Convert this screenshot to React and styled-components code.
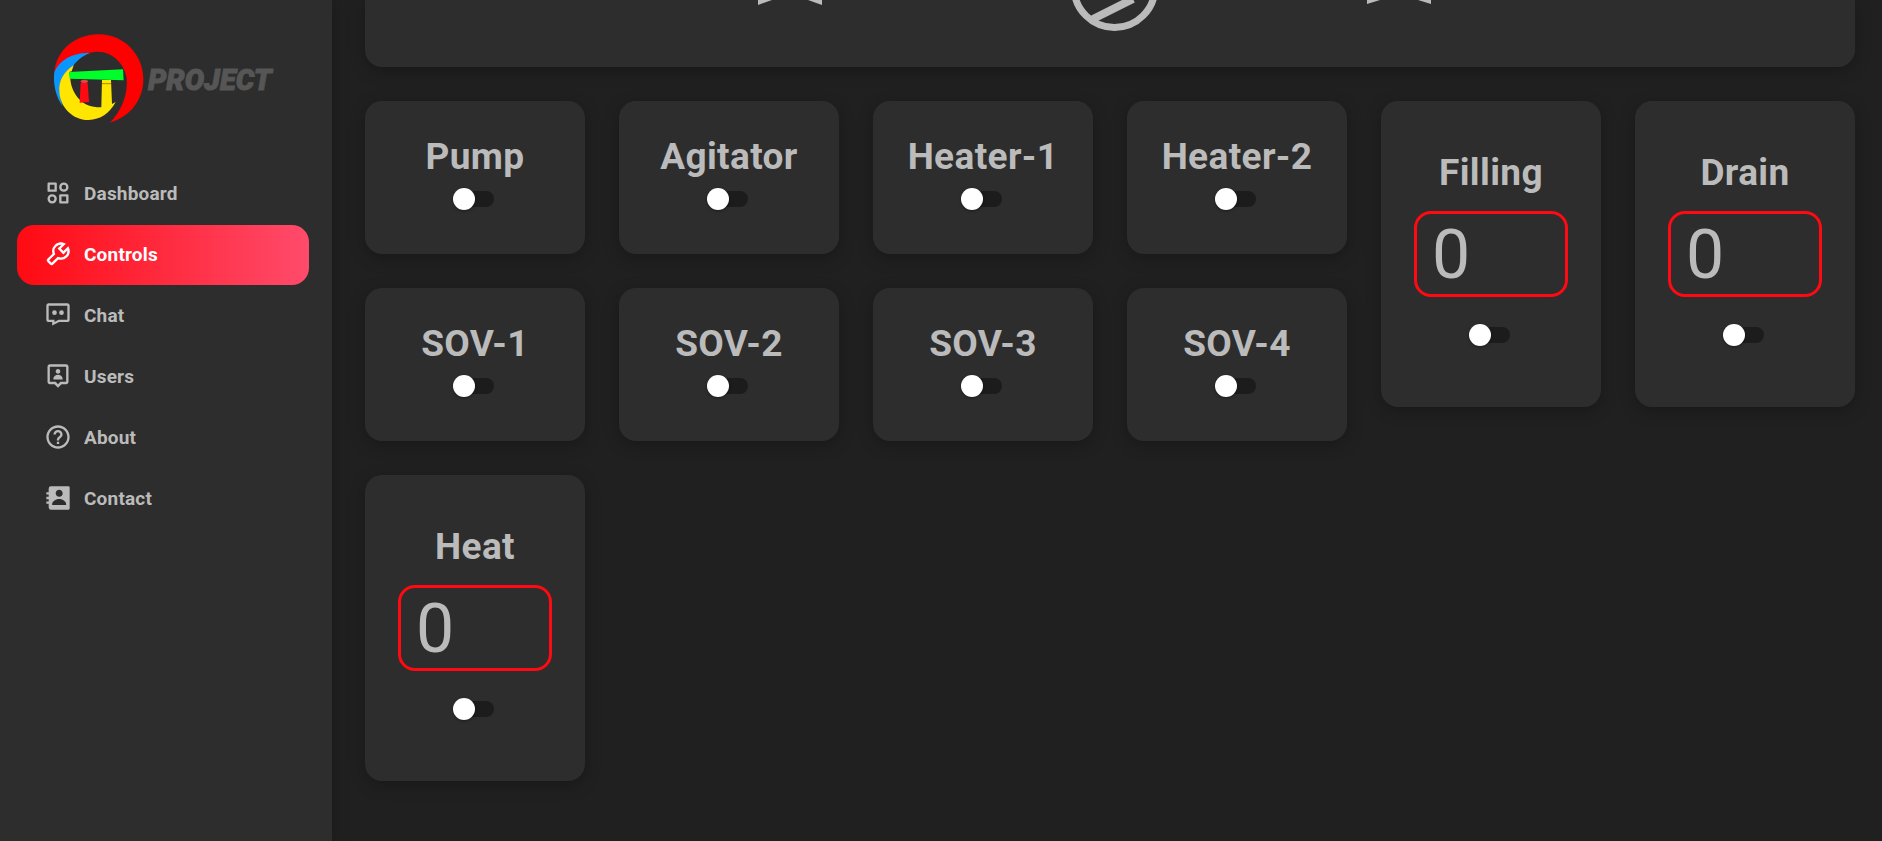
import React from "react";
import styled, { createGlobalStyle } from "styled-components";
import {
  BiWrench,
  BiUserPin,
  BiHelpCircle,
  BiSolidContact,
} from "react-icons/bi";

const color = {
  page: "#202020",
  surface: "#2d2d2d",
  text: "#bbbbbb",
  track: "#1c1c1c",
  accent: "#ff0a12",
  accentSoft: "#ff4b6b",
};

const GlobalStyle = createGlobalStyle`
  *, *::before, *::after { box-sizing: border-box; }
  body {
    margin: 0;
    background: ${color.page};
    color: ${color.text};
    font-family: Roboto, "Liberation Sans", sans-serif;
  }
`;

const Layout = styled.div`
  display: flex;
  min-height: 100vh;
`;

const Sidebar = styled.aside`
  flex: 0 0 332px;
  padding: 33px 23px 0 17px;
  background: ${color.surface};
  box-shadow: 0 4px 16px rgba(0, 0, 0, 0.25);
`;

const Brand = styled.a`
  display: flex;
  align-items: center;
  gap: 4px;
  margin: 0 0 40px 36px;
  text-decoration: none;
`;

const BrandName = styled.span`
  padding-top: 2px;
  color: #565656;
  font: italic 900 29px/40px Roboto, sans-serif;
  -webkit-text-stroke: 1px #565656;
`;

const NavList = styled.ul`
  display: flex;
  flex-direction: column;
  gap: 1px;
  margin: 0;
  padding: 0;
  list-style: none;
`;

const NavLink = styled.a`
  display: flex;
  align-items: center;
  gap: 12px;
  height: 60px;
  padding: 0 27px 2px;
  border-radius: 17px;
  color: ${(p) => (p.$active ? "#ffffff" : color.text)};
  background: ${(p) =>
    p.$active
      ? `linear-gradient(to right, ${color.accent}, ${color.accentSoft})`
      : "none"};
  font-size: 19px;
  font-weight: 700;
  letter-spacing: 0.01em;
  text-decoration: none;

  svg {
    width: 28px;
    height: 28px;
  }
`;

const Main = styled.main`
  flex: 1;
  min-width: 0;
  padding: 0 27px 60px 33px;
`;

const DiagramPanel = styled.section`
  margin-bottom: 34px;
  border-radius: 0 0 17px 17px;
  background: ${color.surface};
  box-shadow: 0 4px 16px rgba(0, 0, 0, 0.25);

  svg {
    display: block;
    width: 100%;
  }
`;

const Grid = styled.div`
  display: grid;
  grid-template-columns: repeat(6, minmax(0, 1fr));
  gap: 34px;
  align-items: start;
`;

const Card = styled.section`
  display: flex;
  flex-direction: column;
  align-items: center;
  padding: ${(p) => (p.$tall ? "50px 33px 61px" : "34px 16px 44px")};
  grid-row: ${(p) => (p.$tall ? "span 2" : "auto")};
  border-radius: 17px;
  background: ${color.surface};
  box-shadow: 0 4px 16px rgba(0, 0, 0, 0.25);
`;

const CardTitle = styled.label`
  font-size: 37px;
  font-weight: 700;
  line-height: 44px;
  letter-spacing: 0.01em;
  white-space: nowrap;
`;

const AmountInput = styled.input`
  width: 100%;
  height: 86px;
  margin: 16px 0 18px;
  padding: 2px 15px 0;
  border: 3px solid ${color.accent};
  border-radius: 17px;
  outline: none;
  background: transparent;
  color: ${color.text};
  font: 400 68px Roboto, "Liberation Sans", sans-serif;
  appearance: textfield;

  &::-webkit-inner-spin-button {
    appearance: none;
    margin: 0;
  }
`;

const Switch = styled.input`
  appearance: none;
  display: flex;
  align-items: center;
  width: 38px;
  height: 16px;
  margin: 12px 0 3px;
  border-radius: 8px;
  background: ${color.track};
  cursor: pointer;

  &::before {
    content: "";
    flex: none;
    width: 22px;
    height: 22px;
    margin-left: -3px;
    border-radius: 50%;
    background: #ffffff;
    box-shadow: 0 1px 3px rgba(0, 0, 0, 0.4);
  }

  &:checked {
    background: ${color.accent};
  }

  &:checked::before {
    margin-left: 19px;
  }
`;

const DashboardIcon = () => (
  <svg
    viewBox="0 0 24 24"
    fill="none"
    stroke="currentColor"
    strokeWidth="2"
    strokeLinejoin="round"
    aria-hidden="true"
  >
    <rect x="4" y="4" width="6" height="6" />
    <circle cx="17" cy="7" r="3" />
    <circle cx="7" cy="17" r="3" />
    <rect x="14" y="14" width="6" height="6" />
  </svg>
);

const ChatIcon = () => (
  <svg viewBox="0 0 24 24" fill="currentColor" aria-hidden="true">
    <path d="M20 2H4c-1.103 0-2 .897-2 2v12c0 1.103.897 2 2 2h3v3l6-3h7c1.103 0 2-.897 2-2V4c0-1.103-.897-2-2-2zm0 14h-7.500L9 18v-2H4V4h16v12z" />
    <circle cx="9" cy="10" r="2" />
    <circle cx="15" cy="10" r="2" />
  </svg>
);

const Emblem = () => (
  <svg width="91" height="91" viewBox="159 99 273 273" aria-hidden="true">
    <path
      fill="#ff0000"
      d="M163 222C166 152 225 103 296 103C372 103 430 164 430 238C430 298 392 350 330 368C362 336 385 285 380 235C374 190 335 155 295 155C284 155 272 157 262 160C215 160 178 190 163 222Z"
    />
    <path
      fill="#0a95ff"
      d="M163 216C178 180 220 156 270 159C245 168 228 185 220 197C195 212 176 240 179 275C180 292 184 305 188 319C170 295 158 255 163 216Z"
    />
    <path
      fill="#ffe600"
      d="M221 196C190 215 175 245 178 275C180 322 220 361 266 360C302 358 327 342 347 306L336 312L333 240L306 240L304 322C277 323 256 315 240 300C220 280 212 255 211 236L207 216L215 214Z"
    />
    <path fill="#ff0a12" d="M242 248L263 248L267 306L239 308Z" />
    <ellipse cx="253" cy="244" rx="11" ry="5" fill="#e8454a" />
    <path stroke="#6b5f00" strokeWidth="2" d="M306 251H333" />
    <path fill="#00ff2a" d="M207 216L369 208L371 241L209 236Z" />
  </svg>
);

const Diagram = () => (
  <svg viewBox="0 0 1490 67" aria-hidden="true">
    <g fill={color.text}>
      <path d="M393 0H407L393 5Z" />
      <path d="M457 0H443L457 5Z" />
      <path d="M1002 0H1015L1002 4Z" />
      <path d="M1066 0H1053L1066 4Z" />
    </g>
    <g fill="none" stroke={color.text}>
      <circle cx="749.5" cy="-13" r="40.5" strokeWidth="7" />
      <path strokeWidth="8" d="M728 19L768 -1" />
    </g>
  </svg>
);

const navItems = [
  { label: "Dashboard", Icon: DashboardIcon },
  { label: "Controls", Icon: BiWrench, active: true },
  { label: "Chat", Icon: ChatIcon },
  { label: "Users", Icon: BiUserPin },
  { label: "About", Icon: BiHelpCircle },
  { label: "Contact", Icon: BiSolidContact },
];

const devices = [
  { name: "Pump" },
  { name: "Agitator" },
  { name: "Heater-1" },
  { name: "Heater-2" },
  { name: "Filling", amount: true },
  { name: "Drain", amount: true },
  { name: "SOV-1" },
  { name: "SOV-2" },
  { name: "SOV-3" },
  { name: "SOV-4" },
  { name: "Heat", amount: true },
];

const DeviceCard = ({ name, amount }) => (
  <Card $tall={amount}>
    <CardTitle htmlFor={`${name}-switch`}>{name}</CardTitle>
    {amount && (
      <AmountInput type="number" defaultValue="0" aria-label={`${name} amount`} />
    )}
    <Switch type="checkbox" role="switch" id={`${name}-switch`} />
  </Card>
);

export default function App() {
  return (
    <>
      <GlobalStyle />
      <Layout>
        <Sidebar>
          <Brand href="#">
            <Emblem />
            <BrandName>PROJECT</BrandName>
          </Brand>
          <nav>
            <NavList>
              {navItems.map(({ label, Icon, active }) => (
                <li key={label}>
                  <NavLink
                    href="#"
                    $active={active}
                    aria-current={active ? "page" : undefined}
                  >
                    <Icon />
                    {label}
                  </NavLink>
                </li>
              ))}
            </NavList>
          </nav>
        </Sidebar>
        <Main>
          <DiagramPanel>
            <Diagram />
          </DiagramPanel>
          <Grid>
            {devices.map((device) => (
              <DeviceCard key={device.name} {...device} />
            ))}
          </Grid>
        </Main>
      </Layout>
    </>
  );
}
